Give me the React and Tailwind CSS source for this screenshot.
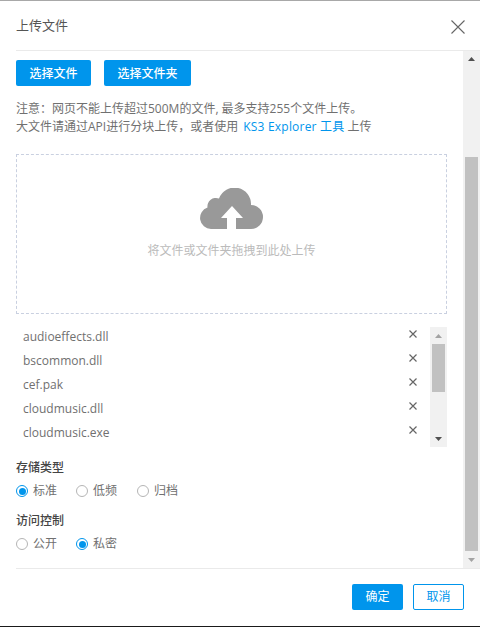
const files = ["audioeffects.dll", "bscommon.dll", "cef.pak", "cloudmusic.dll", "cloudmusic.exe"];
const font = { fontFamily: '"Open Sans", "Noto Sans CJK SC", sans-serif' };

function Radio({ label, checked, className = "" }) {
  return (
    <label className={`flex items-center gap-[5px] ${className}`}>
      <span className={`flex h-[12px] w-[12px] items-center justify-center rounded-full border ${checked ? "border-[#0095ec]" : "border-[#b5b5b5]"}`}>
        {checked && <span className="h-[7px] w-[7px] shrink-0 rounded-full bg-[#0095ec]" />}
      </span>
      <span>{label}</span>
    </label>
  );
}

function Arrow({ up, color }) {
  return (
    <svg width="7" height="4" viewBox="0 0 7 4" className="block">
      <path d={up ? "M3.5 0L7 4H0Z" : "M0 0H7L3.5 4Z"} fill={color} />
    </svg>
  );
}

export default function App() {
  return (
    <div style={font} className="flex h-[627px] w-[480px] flex-col overflow-hidden border-t border-b border-t-[#a8a8a8] border-b-[#1a1a1a] bg-white text-[12px] text-[#707070]">
      <header className="flex h-[49px] items-start justify-between pl-4 pr-[15px]">
        <h1 className="mt-[15px] text-[13px] leading-[18px] font-normal text-[#555]">上传文件</h1>
        <svg width="14" height="14" viewBox="0 0 14 14" className="mt-[19px]" stroke="#666" strokeWidth="1.1">
          <path d="M0.5 0.5L13.5 13.5M13.5 0.5L0.5 13.5" />
        </svg>
      </header>
      <div className="ml-4 flex h-[519px] border-t border-b border-[#eaeaea]">
        <main className="w-[431px] shrink-0">
          <div className="mt-[9px] flex gap-[13px]">
            <button className="h-[26px] w-[75px] rounded-[2px] bg-[#0095ec] pt-px font-medium text-white">选择文件</button>
            <button className="h-[26px] w-[87px] rounded-[2px] bg-[#0095ec] pt-px font-medium text-white">选择文件夹</button>
          </div>
          <p className="mt-[14px] leading-[18px]">
            注意：网页不能上传超过500M的文件, 最多支持255个文件上传。<br />
            大文件请通过API进行分块上传，或者使用 <a className="ml-[2px] tracking-[0.2px] text-[#0095ec]">KS3 Explorer 工具</a> 上传
          </p>
          <section className="mt-[18px] flex h-[160px] flex-col items-center border border-dashed border-[#c9d0e0]">
            <svg width="64" height="42" viewBox="0 0 64 42" className="mt-[33px]">
              <path fill="#999" d="M11 41A11 11 0 0 1 7.5 19.6A8.5 8.5 0 0 1 19 10.5A16.5 16.5 0 0 1 51 17A12 12 0 0 1 51 41H36V30H43L32 18L21 30H27V41Z" />
            </svg>
            <p className="mt-[12px] leading-[18px] text-[#bbb]">将文件或文件夹拖拽到此处上传</p>
          </section>
          <section className="mt-[13px] flex h-[120px] justify-between">
            <ul className="-mt-[2px] flex-1 pl-[7px] pr-[17px]">
              {files.map((f) => (
                <li key={f} className="flex h-6 items-center justify-between">
                  <span>{f}</span>
                  <svg width="8" height="8" viewBox="0 0 8 8" stroke="#666" strokeWidth="1.2" className="mb-[7px] mr-[-4px]">
                    <path d="M0.5 0.5L7.5 7.5M7.5 0.5L0.5 7.5" />
                  </svg>
                </li>
              ))}
            </ul>
            <div className="flex w-[17px] flex-col items-center bg-[#f1f1f1]">
              <div className="flex h-[17px] items-center"><Arrow up color="#a3a3a3" /></div>
              <div className="h-[48px] w-[13px] bg-[#c1c1c1]" />
              <div className="mt-auto flex h-[17px] items-center"><Arrow color="#505050" /></div>
            </div>
          </section>
          <h2 className="mt-[12px] leading-[18px] font-medium text-[#444]">存储类型</h2>
          <div className="mt-[5px] flex h-[18px] items-center">
            <Radio label="标准" checked className="w-[60px]" />
            <Radio label="低频" className="w-[61px]" />
            <Radio label="归档" />
          </div>
          <h2 className="mt-[12px] leading-[18px] font-medium text-[#444]">访问控制</h2>
          <div className="mt-[5px] flex h-[18px] items-center">
            <Radio label="公开" className="w-[60px]" />
            <Radio label="私密" checked />
          </div>
        </main>
        <div className="ml-auto flex w-[17px] flex-col items-center bg-[#f1f1f1]">
          <div className="flex h-[17px] items-center"><Arrow up color="#505050" /></div>
          <div className="mt-[89px] h-[395px] w-[13px] bg-[#c1c1c1]" />
          <div className="mt-auto flex h-[17px] items-center"><Arrow color="#a3a3a3" /></div>
        </div>
      </div>
      <footer className="flex flex-1 items-start justify-end gap-[10px] pr-4 pt-[15px]">
        <button className="h-[26px] w-[51px] rounded-[2px] bg-[#0095ec] text-white">确定</button>
        <button className="h-[26px] w-[51px] rounded-[2px] border border-[#0095ec] text-[#0095ec]">取消</button>
      </footer>
    </div>
  );
}
